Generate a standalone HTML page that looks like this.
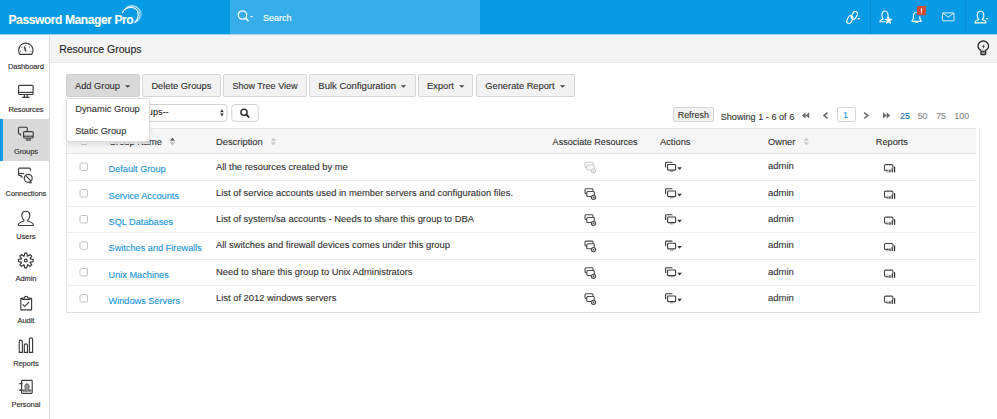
<!DOCTYPE html>
<html><head><meta charset="utf-8"><title>Password Manager Pro - Resource Groups</title>
<style>
html,body{margin:0;padding:0;}
body{width:997px;height:419px;overflow:hidden;position:relative;background:#fff;font-family:"Liberation Sans", sans-serif;}
.t{position:absolute;white-space:pre;-webkit-text-stroke:0.12px currentColor;}
</style></head><body>
<div style="position:absolute;left:0px;top:0px;width:997px;height:34px;background:#069be4"></div>
<div style="position:absolute;left:230px;top:0px;width:250px;height:34px;background:#37aee9"></div>
<div style="position:absolute;left:870px;top:0px;width:1px;height:34px;background:#0a8bd0"></div>
<div style="position:absolute;left:965px;top:0px;width:1px;height:34px;background:#0a8bd0"></div>
<div class="t" style="left:8.5px;top:12.74px;font-size:12px;line-height:14.4px;color:#fff;font-weight:bold;letter-spacing:-0.4px;">Password Manager Pro</div>
<svg style="position:absolute;left:0px;top:0px;" width="160" height="34" viewBox="0 0 160 34">
<g fill="none" stroke="#fff" stroke-linecap="round">
<path d="M122.5 12.8 C123.8 7.8, 132.5 5.6, 136.6 9.6 C139.4 12.6, 138.8 18.6, 134.6 22.6" stroke-width="1.1"/>
<path d="M123.6 10.6 C126.6 5.6, 135.2 4.4, 138.8 9.6 C141 13.4, 140.2 19, 135.8 22.3" stroke-width="0.8" opacity="0.9"/>
<path d="M126.2 7.6 C129.8 4.3, 137.4 4.9, 140.4 10.6 C142.1 14.5, 141.2 18.6, 137 21.6" stroke-width="0.7" opacity="0.8"/>
</g></svg>
<svg style="position:absolute;left:236px;top:9px;" width="20" height="16" viewBox="0 0 20 16">
<g fill="none" stroke="#fff" stroke-width="1.3">
<circle cx="6.5" cy="6" r="4.2"/>
<path d="M9.5 9 L12.5 12.2" stroke-width="1.6"/>
</g>
<path d="M14 7 h3 l-1.5 1.6z" fill="#fff"/></svg>
<div class="t" style="left:263px;top:12.58px;font-size:9px;line-height:10.8px;color:#fff;font-weight:normal;letter-spacing:0px;">Search</div>
<div style="position:absolute;left:49px;top:34px;width:1px;height:385px;background:#dcdcdc"></div>
<div style="position:absolute;left:0px;top:119px;width:49px;height:42px;background:#d9d9d9"></div>
<div style="position:absolute;left:0px;top:119px;width:3px;height:42px;background:#0a9be2"></div>
<div class="t" style="left:-24.1px;width:100px;text-align:center;top:62.40px;font-size:7.5px;line-height:9.0px;color:#2a2a2a;font-weight:normal;letter-spacing:-0.1px;">Dashboard</div>
<div class="t" style="left:-24.1px;width:100px;text-align:center;top:104.80px;font-size:7.5px;line-height:9.0px;color:#2a2a2a;font-weight:normal;letter-spacing:-0.1px;">Resources</div>
<div class="t" style="left:-24.1px;width:100px;text-align:center;top:147.10px;font-size:7.5px;line-height:9.0px;color:#2a2a2a;font-weight:normal;letter-spacing:-0.1px;">Groups</div>
<div class="t" style="left:-24.1px;width:100px;text-align:center;top:189.00px;font-size:7.5px;line-height:9.0px;color:#2a2a2a;font-weight:normal;letter-spacing:-0.1px;">Connections</div>
<div class="t" style="left:-24.1px;width:100px;text-align:center;top:231.70px;font-size:7.5px;line-height:9.0px;color:#2a2a2a;font-weight:normal;letter-spacing:-0.1px;">Users</div>
<div class="t" style="left:-24.1px;width:100px;text-align:center;top:274.00px;font-size:7.5px;line-height:9.0px;color:#2a2a2a;font-weight:normal;letter-spacing:-0.1px;">Admin</div>
<div class="t" style="left:-24.1px;width:100px;text-align:center;top:316.00px;font-size:7.5px;line-height:9.0px;color:#2a2a2a;font-weight:normal;letter-spacing:-0.1px;">Audit</div>
<div class="t" style="left:-24.1px;width:100px;text-align:center;top:358.60px;font-size:7.5px;line-height:9.0px;color:#2a2a2a;font-weight:normal;letter-spacing:-0.1px;">Reports</div>
<div class="t" style="left:-24.1px;width:100px;text-align:center;top:399.90px;font-size:7.5px;line-height:9.0px;color:#2a2a2a;font-weight:normal;letter-spacing:-0.1px;">Personal</div>
<div style="position:absolute;left:50px;top:34px;width:947px;height:28px;background:#f4f4f4"></div>
<div style="position:absolute;left:0px;top:34px;width:997px;height:1px;background:#9ad2ef"></div>
<div style="position:absolute;left:230px;top:34px;width:250px;height:1px;background:#a8d8f0"></div>
<div style="position:absolute;left:50px;top:62px;width:947px;height:1px;background:#e6e6e6"></div>
<div class="t" style="left:59.2px;top:43.06px;font-size:10.5px;line-height:12.6px;color:#222;font-weight:normal;letter-spacing:0px;">Resource Groups</div>
<div style="position:absolute;left:66px;top:74px;width:72px;height:20.5px;background:#d9d9d9;border:1px solid #d0d0d0;border-radius:2px"></div>
<div class="t" style="left:75px;top:80.70px;font-size:9.3px;line-height:11.16px;color:#333;font-weight:normal;letter-spacing:0px;">Add Group</div>
<div style="position:absolute;left:142.4px;top:74px;width:76.19999999999999px;height:20.5px;background:#f2f2f2;border:1px solid #d6d6d6;border-radius:2px"></div>
<div class="t" style="left:151.4px;top:80.70px;font-size:9.3px;line-height:11.16px;color:#333;font-weight:normal;letter-spacing:0px;">Delete Groups</div>
<div style="position:absolute;left:223.4px;top:74px;width:81.29999999999998px;height:20.5px;background:#f2f2f2;border:1px solid #d6d6d6;border-radius:2px"></div>
<div class="t" style="left:232.4px;top:80.93px;font-size:9.05px;line-height:10.86px;color:#333;font-weight:normal;letter-spacing:0px;">Show Tree View</div>
<div style="position:absolute;left:309.3px;top:74px;width:104.30000000000001px;height:20.5px;background:#f2f2f2;border:1px solid #d6d6d6;border-radius:2px"></div>
<div class="t" style="left:318.3px;top:79.91px;font-size:9.5px;line-height:11.4px;color:#333;font-weight:normal;letter-spacing:0px;">Bulk Configuration</div>
<div style="position:absolute;left:418.1px;top:74px;width:53.39999999999998px;height:20.5px;background:#f2f2f2;border:1px solid #d6d6d6;border-radius:2px"></div>
<div class="t" style="left:427.1px;top:80.74px;font-size:9.25px;line-height:11.1px;color:#333;font-weight:normal;letter-spacing:0px;">Export</div>
<div style="position:absolute;left:476.3px;top:74px;width:96.30000000000001px;height:20.5px;background:#f2f2f2;border:1px solid #d6d6d6;border-radius:2px"></div>
<div class="t" style="left:485.3px;top:80.70px;font-size:9.3px;line-height:11.16px;color:#333;font-weight:normal;letter-spacing:0px;">Generate Report</div>
<div style="position:absolute;left:66px;top:128px;width:1px;height:184px;background:#e3e3e3"></div>
<div style="position:absolute;left:979px;top:128px;width:1px;height:184px;background:#e3e3e3"></div>
<div style="position:absolute;left:67px;top:128px;width:909px;height:1px;background:#e8e8e8"></div>
<div style="position:absolute;left:67px;top:129px;width:909px;height:24px;background:#f6f6f6"></div>
<div style="position:absolute;left:67px;top:153px;width:909px;height:1px;background:#e6e6e6"></div>
<div style="position:absolute;left:67px;top:180px;width:909px;height:1px;background:#ececec"></div>
<div style="position:absolute;left:67px;top:206px;width:909px;height:1px;background:#ececec"></div>
<div style="position:absolute;left:67px;top:232px;width:909px;height:1px;background:#ececec"></div>
<div style="position:absolute;left:67px;top:259px;width:909px;height:1px;background:#ececec"></div>
<div style="position:absolute;left:67px;top:285px;width:909px;height:1px;background:#ececec"></div>
<div style="position:absolute;left:66px;top:312px;width:914px;height:1px;background:#dedede"></div>
<div class="t" style="left:108.9px;top:136.94px;font-size:9.25px;line-height:11.1px;color:#333;font-weight:normal;letter-spacing:0px;">Group Name</div>
<div class="t" style="left:216px;top:136.85px;font-size:9.35px;line-height:11.22px;color:#333;font-weight:normal;letter-spacing:0px;">Description</div>
<div class="t" style="left:552.6px;top:137.13px;font-size:9.05px;line-height:10.86px;color:#333;font-weight:normal;letter-spacing:0px;">Associate Resources</div>
<div class="t" style="left:660px;top:136.90px;font-size:9.3px;line-height:11.16px;color:#333;font-weight:normal;letter-spacing:0px;">Actions</div>
<div class="t" style="left:768px;top:136.90px;font-size:9.3px;line-height:11.16px;color:#333;font-weight:normal;letter-spacing:0px;">Owner</div>
<div class="t" style="left:875.8px;top:136.99px;font-size:9.2px;line-height:11.04px;color:#333;font-weight:normal;letter-spacing:0px;">Reports</div>
<div class="t" style="left:108.5px;top:164.49px;font-size:9.2px;line-height:11.04px;color:#1894dc;font-weight:normal;letter-spacing:0px;">Default Group</div>
<div class="t" style="left:216px;top:160.50px;font-size:9.4px;line-height:11.28px;color:#333;font-weight:normal;letter-spacing:0px;">All the resources created by me</div>
<div class="t" style="left:768px;top:160.41px;font-size:9.5px;line-height:11.4px;color:#333;font-weight:normal;letter-spacing:0px;">admin</div>
<div class="t" style="left:108.5px;top:190.99px;font-size:9.2px;line-height:11.04px;color:#1894dc;font-weight:normal;letter-spacing:0px;">Service Accounts</div>
<div class="t" style="left:216px;top:187.00px;font-size:9.4px;line-height:11.28px;color:#333;font-weight:normal;letter-spacing:0px;">List of service accounts used in member servers and configuration files.</div>
<div class="t" style="left:768px;top:186.91px;font-size:9.5px;line-height:11.4px;color:#333;font-weight:normal;letter-spacing:0px;">admin</div>
<div class="t" style="left:108.5px;top:216.99px;font-size:9.2px;line-height:11.04px;color:#1894dc;font-weight:normal;letter-spacing:0px;">SQL Databases</div>
<div class="t" style="left:216px;top:213.00px;font-size:9.4px;line-height:11.28px;color:#333;font-weight:normal;letter-spacing:0px;">List of system/sa accounts - Needs to share this group to DBA</div>
<div class="t" style="left:768px;top:212.91px;font-size:9.5px;line-height:11.4px;color:#333;font-weight:normal;letter-spacing:0px;">admin</div>
<div class="t" style="left:108.5px;top:243.29px;font-size:9.2px;line-height:11.04px;color:#1894dc;font-weight:normal;letter-spacing:0px;">Switches and Firewalls</div>
<div class="t" style="left:216px;top:239.30px;font-size:9.4px;line-height:11.28px;color:#333;font-weight:normal;letter-spacing:0px;">All switches and firewall devices comes under this group</div>
<div class="t" style="left:768px;top:239.21px;font-size:9.5px;line-height:11.4px;color:#333;font-weight:normal;letter-spacing:0px;">admin</div>
<div class="t" style="left:108.5px;top:269.99px;font-size:9.2px;line-height:11.04px;color:#1894dc;font-weight:normal;letter-spacing:0px;">Unix Machines</div>
<div class="t" style="left:216px;top:266.00px;font-size:9.4px;line-height:11.28px;color:#333;font-weight:normal;letter-spacing:0px;">Need to share this group to Unix Administrators</div>
<div class="t" style="left:768px;top:265.91px;font-size:9.5px;line-height:11.4px;color:#333;font-weight:normal;letter-spacing:0px;">admin</div>
<div class="t" style="left:108.5px;top:295.99px;font-size:9.2px;line-height:11.04px;color:#1894dc;font-weight:normal;letter-spacing:0px;">Windows Servers</div>
<div class="t" style="left:216px;top:292.00px;font-size:9.4px;line-height:11.28px;color:#333;font-weight:normal;letter-spacing:0px;">List of 2012 windows servers</div>
<div class="t" style="left:768px;top:291.91px;font-size:9.5px;line-height:11.4px;color:#333;font-weight:normal;letter-spacing:0px;">admin</div>
<svg style="position:absolute;left:0;top:0" width="997" height="419" viewBox="0 0 997 419"><path d="M125.0 85.2 h5.4 l-2.7 2.6z" fill="#444"/><path d="M400.8 85.2 h5.4 l-2.7 2.6z" fill="#444"/><path d="M459.1 85.2 h5.4 l-2.7 2.6z" fill="#444"/><path d="M559.8 85.2 h5.4 l-2.7 2.6z" fill="#444"/><path d="M169.8 140.8 l2.6 -3.2 l2.6 3.2z" fill="#666"/><path d="M169.8 142.2 l2.6 3.2 l2.6 -3.2z" fill="#bbb"/><path d="M270.8 140.8 l2.6 -3.2 l2.6 3.2z" fill="#c8c8c8"/><path d="M270.8 142.2 l2.6 3.2 l2.6 -3.2z" fill="#c8c8c8"/><path d="M803.8 140.8 l2.6 -3.2 l2.6 3.2z" fill="#c8c8c8"/><path d="M803.8 142.2 l2.6 3.2 l2.6 -3.2z" fill="#c8c8c8"/><rect x="80.5" y="137.5" width="7" height="7" rx="1.5" fill="#fff" stroke="#c4c4c4" stroke-width="1"/><rect x="70.5" y="104.5" width="156.5" height="16.8" rx="3" fill="#fff" stroke="#d2d2d2" stroke-width="1"/><path d="M220.2 112.2 l1.75 -3.2 l1.75 3.2z M220.2 113.4 l1.75 3.2 l1.75 -3.2z" fill="#333"/><rect x="231.8" y="104.5" width="26.5" height="16.8" rx="3" fill="#fff" stroke="#d2d2d2" stroke-width="1"/><circle cx="244" cy="112.3" r="3.1" fill="none" stroke="#333" stroke-width="1.5"/><path d="M246.2 114.5 l2.5 2.5" stroke="#333" stroke-width="1.8" stroke-linecap="round"/><path d="M805.6 112.3 L802 115.45 L805.6 118.6 Z M809.2 112.3 L805.6 115.45 L809.2 118.6 Z" fill="#6a6a6a"/><path d="M827.6 112.6 l-3.6 2.95 l3.6 2.95" fill="none" stroke="#6a6a6a" stroke-width="1.6"/><path d="M864.2 112.6 l3.6 2.95 l-3.6 2.95" fill="none" stroke="#6a6a6a" stroke-width="1.6"/><path d="M883 112.3 L886.6 115.45 L883 118.6 Z M886.6 112.3 L890.2 115.45 L886.6 118.6 Z" fill="#6a6a6a"/><rect x="80" y="163.00" width="7.5" height="7.5" rx="1.5" fill="#fff" stroke="#c2c2c2" stroke-width="1"/><g fill="none" stroke="#c9c9c9" stroke-width="1.1"><rect x="585" y="162.3" width="8" height="4.8" rx="1"/><rect x="586.8" y="165.0" width="7.5" height="5" rx="1" fill="#fff"/><circle cx="593.5" cy="170.8" r="2.1" fill="#fff"/></g><rect x="592.7" y="170.0" width="1.6" height="1.6" fill="#c9c9c9"/><g fill="none" stroke="#3a3a3a" stroke-width="1.1"><path d="M665.6 167.5 v-4.4 a0.8 0.8 0 0 1 0.8 -0.8 h6"/><rect x="667.6" y="164.5" width="8" height="5.6" rx="0.8" fill="#fff"/></g><path d="M670 171.4 h3.4" stroke="#888" stroke-width="0.9"/><path d="M677.3 167.3 h4.6 l-2.3 2.6z" fill="#333"/><rect x="884.5" y="164.60" width="8.4" height="6.2" rx="1" fill="#fff" stroke="#454545" stroke-width="1.05"/><path d="M885.6 169.60 h6.2" stroke="#bbb" stroke-width="1"/><rect x="888.7" y="168.40" width="7" height="4.3" fill="#fff"/><path d="M886 172.10 h3" stroke="#aaa" stroke-width="0.9"/><rect x="889.3" y="169.60" width="1.3" height="2.7" fill="#333"/><rect x="891.6" y="168.30" width="1.3" height="4" fill="#333"/><rect x="893.9" y="166.70" width="1.3" height="5.6" fill="#333"/><rect x="80" y="189.50" width="7.5" height="7.5" rx="1.5" fill="#fff" stroke="#c2c2c2" stroke-width="1"/><g fill="none" stroke="#4a4a4a" stroke-width="1.1"><rect x="585" y="188.8" width="8" height="4.8" rx="1"/><rect x="586.8" y="191.5" width="7.5" height="5" rx="1" fill="#fff"/><circle cx="593.5" cy="197.3" r="2.1" fill="#fff"/></g><rect x="592.7" y="196.5" width="1.6" height="1.6" fill="#4a4a4a"/><g fill="none" stroke="#3a3a3a" stroke-width="1.1"><path d="M665.6 194.0 v-4.4 a0.8 0.8 0 0 1 0.8 -0.8 h6"/><rect x="667.6" y="191.0" width="8" height="5.6" rx="0.8" fill="#fff"/></g><path d="M670 197.9 h3.4" stroke="#888" stroke-width="0.9"/><path d="M677.3 193.8 h4.6 l-2.3 2.6z" fill="#333"/><rect x="884.5" y="191.10" width="8.4" height="6.2" rx="1" fill="#fff" stroke="#454545" stroke-width="1.05"/><path d="M885.6 196.10 h6.2" stroke="#bbb" stroke-width="1"/><rect x="888.7" y="194.90" width="7" height="4.3" fill="#fff"/><path d="M886 198.60 h3" stroke="#aaa" stroke-width="0.9"/><rect x="889.3" y="196.10" width="1.3" height="2.7" fill="#333"/><rect x="891.6" y="194.80" width="1.3" height="4" fill="#333"/><rect x="893.9" y="193.20" width="1.3" height="5.6" fill="#333"/><rect x="80" y="215.50" width="7.5" height="7.5" rx="1.5" fill="#fff" stroke="#c2c2c2" stroke-width="1"/><g fill="none" stroke="#4a4a4a" stroke-width="1.1"><rect x="585" y="214.8" width="8" height="4.8" rx="1"/><rect x="586.8" y="217.5" width="7.5" height="5" rx="1" fill="#fff"/><circle cx="593.5" cy="223.3" r="2.1" fill="#fff"/></g><rect x="592.7" y="222.5" width="1.6" height="1.6" fill="#4a4a4a"/><g fill="none" stroke="#3a3a3a" stroke-width="1.1"><path d="M665.6 220.0 v-4.4 a0.8 0.8 0 0 1 0.8 -0.8 h6"/><rect x="667.6" y="217.0" width="8" height="5.6" rx="0.8" fill="#fff"/></g><path d="M670 223.9 h3.4" stroke="#888" stroke-width="0.9"/><path d="M677.3 219.8 h4.6 l-2.3 2.6z" fill="#333"/><rect x="884.5" y="217.10" width="8.4" height="6.2" rx="1" fill="#fff" stroke="#454545" stroke-width="1.05"/><path d="M885.6 222.10 h6.2" stroke="#bbb" stroke-width="1"/><rect x="888.7" y="220.90" width="7" height="4.3" fill="#fff"/><path d="M886 224.60 h3" stroke="#aaa" stroke-width="0.9"/><rect x="889.3" y="222.10" width="1.3" height="2.7" fill="#333"/><rect x="891.6" y="220.80" width="1.3" height="4" fill="#333"/><rect x="893.9" y="219.20" width="1.3" height="5.6" fill="#333"/><rect x="80" y="241.80" width="7.5" height="7.5" rx="1.5" fill="#fff" stroke="#c2c2c2" stroke-width="1"/><g fill="none" stroke="#4a4a4a" stroke-width="1.1"><rect x="585" y="241.10000000000002" width="8" height="4.8" rx="1"/><rect x="586.8" y="243.8" width="7.5" height="5" rx="1" fill="#fff"/><circle cx="593.5" cy="249.60000000000002" r="2.1" fill="#fff"/></g><rect x="592.7" y="248.8" width="1.6" height="1.6" fill="#4a4a4a"/><g fill="none" stroke="#3a3a3a" stroke-width="1.1"><path d="M665.6 246.3 v-4.4 a0.8 0.8 0 0 1 0.8 -0.8 h6"/><rect x="667.6" y="243.3" width="8" height="5.6" rx="0.8" fill="#fff"/></g><path d="M670 250.20000000000002 h3.4" stroke="#888" stroke-width="0.9"/><path d="M677.3 246.10000000000002 h4.6 l-2.3 2.6z" fill="#333"/><rect x="884.5" y="243.40" width="8.4" height="6.2" rx="1" fill="#fff" stroke="#454545" stroke-width="1.05"/><path d="M885.6 248.40 h6.2" stroke="#bbb" stroke-width="1"/><rect x="888.7" y="247.20" width="7" height="4.3" fill="#fff"/><path d="M886 250.90 h3" stroke="#aaa" stroke-width="0.9"/><rect x="889.3" y="248.40" width="1.3" height="2.7" fill="#333"/><rect x="891.6" y="247.10" width="1.3" height="4" fill="#333"/><rect x="893.9" y="245.50" width="1.3" height="5.6" fill="#333"/><rect x="80" y="268.50" width="7.5" height="7.5" rx="1.5" fill="#fff" stroke="#c2c2c2" stroke-width="1"/><g fill="none" stroke="#4a4a4a" stroke-width="1.1"><rect x="585" y="267.8" width="8" height="4.8" rx="1"/><rect x="586.8" y="270.5" width="7.5" height="5" rx="1" fill="#fff"/><circle cx="593.5" cy="276.3" r="2.1" fill="#fff"/></g><rect x="592.7" y="275.5" width="1.6" height="1.6" fill="#4a4a4a"/><g fill="none" stroke="#3a3a3a" stroke-width="1.1"><path d="M665.6 273.0 v-4.4 a0.8 0.8 0 0 1 0.8 -0.8 h6"/><rect x="667.6" y="270.0" width="8" height="5.6" rx="0.8" fill="#fff"/></g><path d="M670 276.9 h3.4" stroke="#888" stroke-width="0.9"/><path d="M677.3 272.8 h4.6 l-2.3 2.6z" fill="#333"/><rect x="884.5" y="270.10" width="8.4" height="6.2" rx="1" fill="#fff" stroke="#454545" stroke-width="1.05"/><path d="M885.6 275.10 h6.2" stroke="#bbb" stroke-width="1"/><rect x="888.7" y="273.90" width="7" height="4.3" fill="#fff"/><path d="M886 277.60 h3" stroke="#aaa" stroke-width="0.9"/><rect x="889.3" y="275.10" width="1.3" height="2.7" fill="#333"/><rect x="891.6" y="273.80" width="1.3" height="4" fill="#333"/><rect x="893.9" y="272.20" width="1.3" height="5.6" fill="#333"/><rect x="80" y="294.50" width="7.5" height="7.5" rx="1.5" fill="#fff" stroke="#c2c2c2" stroke-width="1"/><g fill="none" stroke="#4a4a4a" stroke-width="1.1"><rect x="585" y="293.8" width="8" height="4.8" rx="1"/><rect x="586.8" y="296.5" width="7.5" height="5" rx="1" fill="#fff"/><circle cx="593.5" cy="302.3" r="2.1" fill="#fff"/></g><rect x="592.7" y="301.5" width="1.6" height="1.6" fill="#4a4a4a"/><g fill="none" stroke="#3a3a3a" stroke-width="1.1"><path d="M665.6 299.0 v-4.4 a0.8 0.8 0 0 1 0.8 -0.8 h6"/><rect x="667.6" y="296.0" width="8" height="5.6" rx="0.8" fill="#fff"/></g><path d="M670 302.9 h3.4" stroke="#888" stroke-width="0.9"/><path d="M677.3 298.8 h4.6 l-2.3 2.6z" fill="#333"/><rect x="884.5" y="296.10" width="8.4" height="6.2" rx="1" fill="#fff" stroke="#454545" stroke-width="1.05"/><path d="M885.6 301.10 h6.2" stroke="#bbb" stroke-width="1"/><rect x="888.7" y="299.90" width="7" height="4.3" fill="#fff"/><path d="M886 303.60 h3" stroke="#aaa" stroke-width="0.9"/><rect x="889.3" y="301.10" width="1.3" height="2.7" fill="#333"/><rect x="891.6" y="299.80" width="1.3" height="4" fill="#333"/><rect x="893.9" y="298.20" width="1.3" height="5.6" fill="#333"/><g fill="none" stroke="#3c3c3c" stroke-width="1.15"><path d="M19.9 54.4 A7.2 7.2 0 1 1 31.7 54.4 Z" stroke-linejoin="round"/><path d="M24.3 46.6 L25.9 51.6" stroke-width="1.5"/></g><g fill="#3c3c3c"><circle cx="20.6" cy="51.3" r="0.5"/><circle cx="21.8" cy="47.3" r="0.5"/><circle cx="25.8" cy="45.4" r="0.5"/><circle cx="29.6" cy="47.1" r="0.5"/><circle cx="30.9" cy="51.3" r="0.5"/></g><g fill="none" stroke="#3c3c3c" stroke-width="1.15"><rect x="18.6" y="85.3" width="14.5" height="9.2" rx="1"/><path d="M18.6 92.4 H33.1"/><path d="M24.4 94.5 v2.6 M27.2 94.5 v2.6"/><path d="M22.2 97.3 H29.6" stroke-width="1.3"/></g><g fill="none" stroke="#3c3c3c" stroke-width="1.15"><path d="M21 134 h-1.5 a1 1 0 0 1 -1 -1 v-4.8 a1 1 0 0 1 1 -1 h6.8 a1 1 0 0 1 1 1 v2.8"/><path d="M20.5 134 v1.7"/><rect x="23.6" y="131.6" width="9.6" height="6.4" rx="1"/><path d="M23.6 136.2 H33.2"/><path d="M27 138 v1.6 M29.8 138 v1.6"/><path d="M25.8 140 H31"/></g><g fill="none" stroke="#3c3c3c" stroke-width="1.15"><path d="M21.5 175.5 h-2 a1 1 0 0 1 -1 -1 v-5.4 a1 1 0 0 1 1 -1 h9.8 a1 1 0 0 1 1 1 v2"/><path d="M18.5 173.5 h5.6"/><path d="M21 175.5 v1.5 h2"/><circle cx="28.2" cy="178.3" r="4"/><path d="M25.5 175.4 L31 181.2"/><path d="M28 182.6 l3.5 0.4 l-1.2 -1.6" stroke-width="1"/></g><path d="M25.8 211.2 c-2.3 0 -4 1.7 -4 4.4 c0 2.1 0.8 3.6 2.1 4.7 v0.7 c-2.9 0.9 -5.5 2.1 -5.5 3.6 v0.9 h14.8 v-0.9 c0 -1.5 -2.6 -2.7 -5.5 -3.6 v-0.7 c1.3 -1.1 2.1 -2.6 2.1 -4.7 c0 -2.7 -1.7 -4.4 -4 -4.4z" fill="none" stroke="#3c3c3c" stroke-width="1.15" stroke-linejoin="round"/><path d="M24.18 256.19 L24.69 253.18 L26.91 253.18 L27.42 256.19 L27.70 256.31 L30.19 254.54 L31.76 256.11 L29.99 258.60 L30.11 258.88 L33.12 259.39 L33.12 261.61 L30.11 262.12 L29.99 262.40 L31.76 264.89 L30.19 266.46 L27.70 264.69 L27.42 264.81 L26.91 267.82 L24.69 267.82 L24.18 264.81 L23.90 264.69 L21.41 266.46 L19.84 264.89 L21.61 262.40 L21.49 262.12 L18.48 261.61 L18.48 259.39 L21.49 258.88 L21.61 258.60 L19.84 256.11 L21.41 254.54 L23.90 256.31Z" fill="none" stroke="#3c3c3c" stroke-width="1.15" stroke-linejoin="round"/><circle cx="25.8" cy="260.5" r="1.4" fill="none" stroke="#3c3c3c" stroke-width="1.15"/><g fill="none" stroke="#3c3c3c" stroke-width="1.15" stroke-linejoin="round"><path d="M22.3 298.3 h-1.5 v11.5 h10.8 v-11.5 h-1.5"/><path d="M22.3 299.3 v-1.3 h2.2 a1.7 1.7 0 0 1 3.4 0 h2.2 v1.3 z"/><path d="M22.6 304.3 l2 2.1 l4.6 -4.3"/></g><g fill="none" stroke="#3c3c3c" stroke-width="1.15"><path d="M19.2 352.4 v-10.6 a1.6 1.6 0 0 1 3.2 0 v10.6 z"/><path d="M24.3 352.4 v-7 a1.6 1.6 0 0 1 3.2 0 v7 z"/><path d="M29.4 352.4 v-13 a1.6 1.6 0 0 1 3.2 0 v13 z"/></g><g fill="none" stroke="#3c3c3c" stroke-width="1.15"><rect x="21.6" y="380.4" width="10.6" height="13" rx="0.8"/><path d="M19.3 383.6 h3.4 M19.3 390.2 h3.4" stroke-width="1.4"/></g><path d="M27 383.8 c-1.3 0 -2.2 1 -2.2 2.5 c0 1.1 0.4 1.9 1 2.4 c-1.6 0.5 -2.8 1.1 -2.8 1.9 v0.6 h8 v-0.6 c0 -0.8 -1.2 -1.4 -2.8 -1.9 c0.6 -0.5 1 -1.3 1 -2.4 c0 -1.5 -0.9 -2.5 -2.2 -2.5z" fill="#999" stroke="#3c3c3c" stroke-width="0.7"/><g fill="none" stroke="#2a2a2a" stroke-width="1.3" stroke-linejoin="round"><path d="M980.9 51.3 v-0.9 c-1.8 -1 -2.9 -2.5 -2.9 -4.1 a5.3 5.3 0 0 1 10.6 0 c0 1.6 -1.1 3.1 -2.9 4.1 v0.9"/><rect x="980.9" y="51.4" width="4.8" height="3.3" rx="0.9" fill="#9a9a9a"/></g><path d="M984.7 42.9 L982 47 L983.5 46.8 L982.3 50.1 L985 45.9 L983.5 46.1 Z" fill="#2a2a2a"/><g fill="none" stroke="#fff" stroke-width="1.1"><rect x="-4.1" y="-2.3" width="8.2" height="4.6" rx="2.3" transform="translate(854.4 15.4) rotate(-63)"/><rect x="-4.1" y="-2.3" width="8.2" height="4.6" rx="2.3" transform="translate(849.8 19.6) rotate(-63)"/></g><path d="M857 18.1 h3.4 l-1.7 1.8z" fill="#fff"/><path d="M887.2 18.6 c0.5 -0.6 0.9 -1.6 0.9 -3 c0 -2.6 -1.4 -4.6 -3.1 -4.6 c-1.7 0 -3.1 2 -3.1 4.6 c0 1.5 0.5 2.7 1.3 3.4 c-1.9 0.6 -3.3 1.4 -3.3 2.2 v0.6 h5.5" fill="none" stroke="#fff" stroke-width="1.1" stroke-linejoin="round"/><path d="M888.50 16.00 L889.68 18.78 L892.68 19.04 L890.40 21.02 L891.09 23.96 L888.50 22.40 L885.91 23.96 L886.60 21.02 L884.32 19.04 L887.32 18.78Z" fill="#fff"/><g fill="none" stroke="#fff" stroke-width="1.1" stroke-linejoin="round"><path d="M916.5 12.2 c-2 0.3 -3.1 2 -3.1 4 v2.4 l-1.3 1.9 v0.9 h9 v-0.9 l-1.3 -1.9 v-2.4"/><path d="M915.2 21.6 a1.4 1.3 0 0 0 2.7 0"/></g><rect x="917" y="6" width="9" height="9.3" rx="1" fill="#d14a35"/><rect x="920.9" y="8.2" width="1.05" height="3.6" fill="#fff"/><rect x="920.9" y="12.5" width="1.05" height="1" fill="#fff"/><g fill="none" stroke="#fff" stroke-width="0.9" opacity="0.95"><rect x="942.5" y="12.9" width="11.5" height="7.9" rx="0.5"/><path d="M942.8 13.2 l5.45 4 l5.45 -4"/></g><path d="M980.5 11.3 c-1.9 0 -3.3 1.8 -3.3 4.3 c0 1.7 0.6 3 1.5 3.7 v0.5 c-2.3 0.6 -3.6 1.4 -3.6 2.2 v0.9 h10.8 v-0.9 c0 -0.8 -1.3 -1.6 -3.6 -2.2 v-0.5 c0.9 -0.7 1.5 -2 1.5 -3.7 c0 -2.5 -1.4 -4.3 -3.3 -4.3z" fill="none" stroke="#fff" stroke-width="1.1" stroke-linejoin="round"/><path d="M985.3 18 h3.2 l-1.6 1.7z" fill="#fff"/></svg>
<div class="t" style="left:90.6px;top:107.39px;font-size:9.1px;line-height:10.92px;color:#333;font-weight:normal;letter-spacing:0px;width:78px;text-align:right">--Select Groups--</div>
<div style="position:absolute;left:66px;top:142px;width:84px;height:2px;background:rgba(246,246,246,0.8)"></div>
<div style="position:absolute;left:66px;top:97.5px;width:82px;height:42.5px;background:#fff;border:1px solid #dcdcdc;border-radius:3px;box-shadow:0 3px 5px rgba(0,0,0,0.09)"></div>
<div class="t" style="left:75.2px;top:104.00px;font-size:9.3px;line-height:11.16px;color:#333;font-weight:normal;letter-spacing:0px;">Dynamic Group</div>
<div class="t" style="left:75.2px;top:125.79px;font-size:9.2px;line-height:11.04px;color:#333;font-weight:normal;letter-spacing:0px;">Static Group</div>
<div style="position:absolute;left:673.3px;top:107.2px;width:38.4px;height:13px;background:#f2f2f2;border:1px solid #d6d6d6;border-radius:2px"></div>
<div class="t" style="left:677.7px;top:110.03px;font-size:8.95px;line-height:10.74px;color:#333;font-weight:normal;letter-spacing:0px;">Refresh</div>
<div class="t" style="left:720.7px;top:111.84px;font-size:9.15px;line-height:10.98px;color:#333;font-weight:normal;letter-spacing:0px;">Showing 1 - 6 of 6</div>
<div style="position:absolute;left:837px;top:107px;width:16.8px;height:13.3px;background:#fff;border:1px solid #d6d6d6;border-radius:2px"></div>
<div class="t" style="left:843px;top:110.48px;font-size:9px;line-height:10.8px;color:#1894dc;font-weight:normal;letter-spacing:0px;">1</div>
<div class="t" style="left:900px;top:110.58px;font-size:8.9px;line-height:10.68px;color:#1b6fb8;font-weight:normal;letter-spacing:0px;">25</div>
<div class="t" style="left:917.7px;top:110.58px;font-size:8.9px;line-height:10.68px;color:#888;font-weight:normal;letter-spacing:0px;">50</div>
<div class="t" style="left:936.2px;top:110.58px;font-size:8.9px;line-height:10.68px;color:#888;font-weight:normal;letter-spacing:0px;">75</div>
<div class="t" style="left:954.3px;top:110.58px;font-size:8.9px;line-height:10.68px;color:#888;font-weight:normal;letter-spacing:0px;">100</div>
</body></html>
